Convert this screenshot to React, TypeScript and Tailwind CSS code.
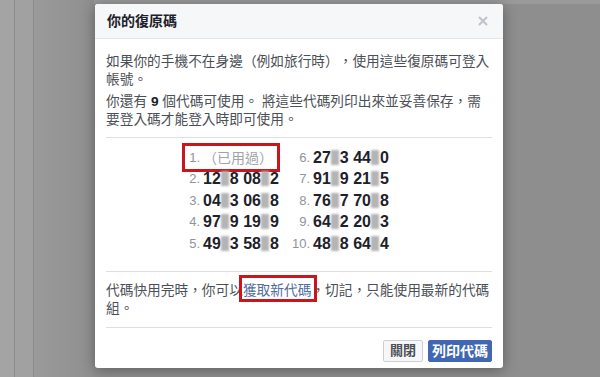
const leftCodes = [
  ["12", "8", "08", "2"],
  ["04", "3", "06", "8"],
  ["97", "9", "19", "9"],
  ["49", "3", "58", "8"],
];

const rightCodes = [
  ["27", "3", "44", "0"],
  ["91", "9", "21", "5"],
  ["76", "7", "70", "8"],
  ["64", "2", "20", "3"],
  ["48", "8", "64", "4"],
];

const Blur = () => (
  <span className="inline-block w-[8px] h-[15px] mx-[0.5px] align-[-2px] bg-[#b4b4b4] blur-[1px]" />
);

const Code = ({ parts }: { parts: string[] }) => (
  <span className="ml-[3px] text-[16px] font-bold text-[#1d2129]">
    {parts[0]}
    <Blur />
    {parts[1]} {parts[2]}
    <Blur />
    {parts[3]}
  </span>
);

const Row = ({ n, children }: { n: number; children: React.ReactNode }) => (
  <div className="flex items-center h-[21.5px]">
    <span className="w-[20px] text-right text-[13px] text-[#90949c]">{n}.</span>
    {children}
  </div>
);

const App = () => {
  return (
    <div
      className="relative w-[600px] h-[377px] overflow-hidden flex bg-[#8e8e8e] [text-spacing-trim:space-all]"
      style={{ fontFamily: '"Liberation Sans", "Noto Sans CJK TC", sans-serif' }}
    >
      <div className="w-[15px] bg-[#a4a4a4] border-r border-[#8c8c8c]" />
      <div className="w-[19px] bg-[#a1a1a1] border-r border-[#8c8c8c]" />
      <div className="w-[60px] bg-gradient-to-r from-[#9a9a9a] to-[#8f8f8f]" />
      <div className="flex-1 border-t-[4px] border-[#9a9a9a]" />

      {/* dialog */}
      <div className="absolute left-[95px] top-[4px] w-[408px] h-[364px] bg-white rounded-[3px] shadow-[0_2px_14px_rgba(0,0,0,0.35)] flex flex-col text-[13.7px] text-[#4b4f56]">
        <div className="h-[35px] flex items-center justify-between px-[12px] bg-[#f6f7f9] border-b border-[#e5e5e5] rounded-t-[3px]">
          <span className="text-[14px] font-bold text-[#1d2129]">你的復原碼</span>
          <svg width="10" height="10" viewBox="0 0 10 10" className="mr-[3px]">
            <path d="M1 1 L9 9 M9 1 L1 9" stroke="#bec2c9" strokeWidth="2" />
          </svg>
        </div>

        <div className="px-[11px] pt-[14px] flex flex-col leading-[18px]">
          <p>如果你的手機不在身邊（例如旅行時），使用這些復原碼可登入帳號。</p>
          <p className="mt-[4px]">
            你還有 <b className="text-[#1d2129]">9</b> 個代碼可使用。 將這些代碼列印出來並妥善保存，需要登入碼才能登入時即可使用。
          </p>
          <div className="mt-[8px] border-t border-[#dddfe2]" />

          <div className="pt-[9px] pb-[16px] pl-[74px] flex">
            <div className="w-[110px] flex flex-col">
              <Row n={1}>
                <span className="relative ml-[3px] text-[14px] text-[#a0a3a8]">
                  （已用過）
                  <span className="absolute -left-[21px] -right-[7px] -top-[6px] -bottom-[5px] border-[3px] border-[#c8161d]" />
                </span>
              </Row>
              {leftCodes.map((c, i) => (
                <Row key={i} n={i + 2}>
                  <Code parts={c} />
                </Row>
              ))}
            </div>
            <div className="flex flex-col">
              {rightCodes.map((c, i) => (
                <Row key={i} n={i + 6}>
                  <Code parts={c} />
                </Row>
              ))}
            </div>
          </div>

          <div className="border-t border-[#dddfe2]" />
          <p className="pt-[10px] pb-[9px]">
            代碼快用完時，你可以
            <span className="relative text-[#4f6d9e]">
              獲取新代碼
              <span className="absolute -left-[4px] -right-[6px] -top-[8px] -bottom-[4px] border-[3px] border-[#c8161d]" />
            </span>
            ，切記，只能使用最新的代碼組。
          </p>
          <div className="border-t border-[#dddfe2]" />

          <div className="pt-[12px] flex justify-end gap-[5px]">
            <button className="h-[22px] w-[40px] flex items-center justify-center bg-[#f6f7f9] border border-[#ced0d4] rounded-[2px] text-[13px] font-bold text-[#4b4f56]">
              關閉
            </button>
            <button className="h-[22px] w-[64px] flex items-center justify-center bg-[#4267b2] border border-[#4267b2] rounded-[2px] text-[14px] font-bold text-white">
              列印代碼
            </button>
          </div>
        </div>
      </div>
    </div>
  );
};

export default App;
